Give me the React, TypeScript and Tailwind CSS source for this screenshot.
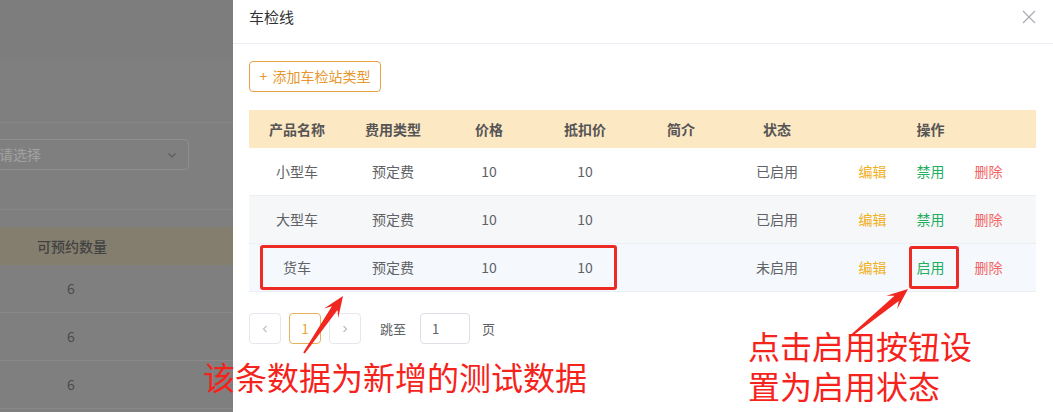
const rows = [
  { name: "小型车", fee: "预定费", price: "10", deduct: "10", status: "已启用", toggle: "禁用", bg: "bg-white" },
  { name: "大型车", fee: "预定费", price: "10", deduct: "10", status: "已启用", toggle: "禁用", bg: "bg-[#f6f7f9]" },
  { name: "货车", fee: "预定费", price: "10", deduct: "10", status: "未启用", toggle: "启用", bg: "bg-[#f5f9fd]" },
];

const headers = ["产品名称", "费用类型", "价格", "抵扣价", "简介", "状态", "操作"];

// arrow polygon from tail to tip, narrow tail widening into a barbed head
const arrowPoints = (x1: number, y1: number, x2: number, y2: number) => {
  const dx = x2 - x1;
  const dy = y2 - y1;
  const len = Math.hypot(dx, dy);
  const ux = dx / len;
  const uy = dy / len;
  const px = -uy;
  const py = ux;
  const head = 21;
  const neck = { x: x2 - ux * head * 0.7, y: y2 - uy * head * 0.7 };
  const wing = { x: x2 - ux * head, y: y2 - uy * head };
  const pts = [
    [x1 + px * 1, y1 + py * 1],
    [neck.x + px * 3.4, neck.y + py * 3.4],
    [wing.x + px * 8.5, wing.y + py * 8.5],
    [x2, y2],
    [wing.x - px * 8.5, wing.y - py * 8.5],
    [neck.x - px * 3.4, neck.y - py * 3.4],
    [x1 - px * 1, y1 - py * 1],
  ];
  return pts.map((p) => `${p[0].toFixed(1)},${p[1].toFixed(1)}`).join(" ");
};

const BackgroundPage = () => (
  <div className="w-[233px] shrink-0 overflow-hidden bg-[#7f7f7f] flex flex-col">
    <div className="h-[60px] bg-[#7d7d7d]" />
    <div className="h-[63px] border-b border-[#878787]" />
    <div className="h-[87px] border-b border-[#878787] pt-[16px]">
      <div className="ml-[-12px] w-[201px] h-[31px] rounded border border-[#8e8e8e] flex items-center justify-between pl-[10px] pr-[10px]">
        <span className="text-[14px] text-[#a2a2a2]">请选择</span>
        <svg width="12" height="12" viewBox="0 0 12 12" fill="none">
          <path d="M2.5 4.5L6 8l3.5-3.5" stroke="#5e5e5e" strokeWidth="1.4" />
        </svg>
      </div>
    </div>
    <div className="h-[17px]" />
    <div className="h-[38px] bg-[#847e6f] flex items-center">
      <div className="w-[144px] text-center text-[14px] font-medium text-[#424242]">可预约数量</div>
    </div>
    {[0, 1, 2].map((i) => (
      <div key={i} className="h-[48px] border-b border-[#8a8a8a] flex items-center">
        <div className="w-[142px] text-center text-[14px] text-[#4b4b4b]">6</div>
      </div>
    ))}
  </div>
);

export default function App() {
  return (
    <div className="relative w-[1053px] h-[412px] overflow-hidden flex font-['Noto_Sans_CJK_SC',sans-serif]">
      <BackgroundPage />

      <div className="flex-1 bg-white flex flex-col">
        <div className="h-[44px] border-b border-[#ebeef5] flex items-start justify-between pl-4 pr-[17px] pt-[6px]">
          <span className="text-[15px] leading-[22px] text-[#303133]">车检线</span>
          <svg width="14" height="14" viewBox="0 0 14 14" className="mt-[4px]">
            <path d="M1 1L13 13M13 1L1 13" stroke="#a8abb2" strokeWidth="1.2" />
          </svg>
        </div>

        <div className="pl-4 pr-[17px] pt-[17px]">
          <button className="h-[31px] w-[132px] rounded border border-[#e8a146] text-[#e8962e] text-[14px] flex items-center justify-center gap-[5px]">
            <span>+</span>
            <span>添加车检站类型</span>
          </button>

          <div className="mt-[18px] text-[14px]">
            <div className="grid grid-cols-[96px_96px_96px_96px_96px_96px_1fr] h-[38px] items-center bg-[#fde8c4] font-semibold text-[#555]">
              {headers.map((h) => (
                <div key={h} className="text-center">{h}</div>
              ))}
            </div>
            {rows.map((r) => (
              <div
                key={r.name}
                className={`grid grid-cols-[96px_96px_96px_96px_96px_96px_1fr] h-[48px] items-center border-b border-[#ebeef5] text-[#606266] ${r.bg}`}
              >
                <div className="text-center">{r.name}</div>
                <div className="text-center">{r.fee}</div>
                <div className="text-center">{r.price}</div>
                <div className="text-center">{r.deduct}</div>
                <div className="text-center" />
                <div className="text-center">{r.status}</div>
                <div className="flex justify-center gap-[30px]">
                  <span className="text-[#f1b01c]">编辑</span>
                  <span className="text-[#1fae62]">{r.toggle}</span>
                  <span className="text-[#f26464]">删除</span>
                </div>
              </div>
            ))}
          </div>

          <div className="mt-[21px] flex items-center text-[13px] text-[#606266]">
            <div className="w-[32px] h-[31px] rounded border border-[#e4e7ed] flex items-center justify-center">
              <svg width="10" height="10" viewBox="0 0 10 10" fill="none">
                <path d="M6.5 2L3.5 5l3 3" stroke="#c0c4cc" strokeWidth="1.4" />
              </svg>
            </div>
            <div className="ml-[8px] w-[32px] h-[31px] rounded border border-[#e6b25c] flex items-center justify-center text-[#e8a23a]">1</div>
            <div className="ml-[8px] w-[32px] h-[31px] rounded border border-[#e4e7ed] flex items-center justify-center">
              <svg width="10" height="10" viewBox="0 0 10 10" fill="none">
                <path d="M3.5 2L6.5 5l-3 3" stroke="#c0c4cc" strokeWidth="1.4" />
              </svg>
            </div>
            <span className="ml-[19px]">跳至</span>
            <div className="ml-[14px] w-[50px] h-[31px] rounded border border-[#dcdfe6] flex items-center pl-[11px] text-[#606266]">1</div>
            <span className="ml-[12px]">页</span>
          </div>
        </div>
      </div>

      {/* annotations drawn over the screenshot */}
      <div className="absolute left-[260px] top-[245px] w-[357px] h-[45px] border-[3px] border-[#ee2a24] rounded-[3px] pointer-events-none" />
      <div className="absolute left-[909px] top-[246px] w-[50px] h-[43px] border-[3px] border-[#ee2a24] rounded-[3px] pointer-events-none" />
      <svg className="absolute left-0 top-0 pointer-events-none" width="1053" height="412">
        <polygon points={arrowPoints(304, 353, 343, 296)} fill="#f0261f" />
        <polygon points={arrowPoints(852, 335, 908, 289)} fill="#f0261f" />
      </svg>
      <div className="absolute left-[203px] top-[360px] text-[32px] leading-[32px] text-[#f5231c] whitespace-nowrap">
        该条数据为新增的测试数据
      </div>
      <div className="absolute left-[748px] top-[325px] text-[32px] leading-[40px] text-[#f5231c] whitespace-nowrap">
        <div>点击启用按钮设</div>
        <div>置为启用状态</div>
      </div>
    </div>
  );
}
